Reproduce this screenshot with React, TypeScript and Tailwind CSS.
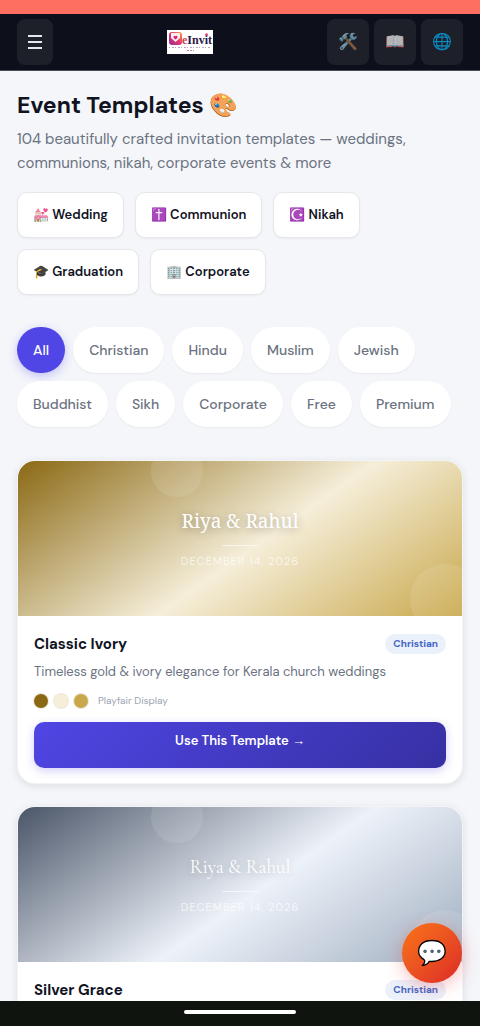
import React, { useState } from "react";

const categories = [
  { icon: "💒", label: "Wedding" },
  { icon: "✝️", label: "Communion" },
  { icon: "☪️", label: "Nikah" },
  { icon: "🎓", label: "Graduation" },
  { icon: "🏢", label: "Corporate" },
];

const filters = [
  "All",
  "Christian",
  "Hindu",
  "Muslim",
  "Jewish",
  "Buddhist",
  "Sikh",
  "Corporate",
  "Free",
  "Premium",
];

const tools = [
  { icon: "🛠️", label: "Tools" },
  { icon: "📖", label: "Guide" },
  { icon: "🌐", label: "Language" },
];

const templates = [
  {
    name: "Classic Ivory",
    tag: "Christian",
    description: "Timeless gold & ivory elegance for Kerala church weddings",
    font: "Playfair Display",
    colors: ["#8b6914", "#f5eed9", "#c9a84c"],
    preview: "bg-[linear-gradient(145deg,#8b6914_0%,#f5eed9_54%,#c9a84c_100%)]",
    title:
      "font-['Noto_Serif','Liberation_Serif',serif] [text-shadow:0_2px_8px_rgba(0,0,0,0.3)]",
  },
  {
    name: "Silver Grace",
    tag: "Christian",
    description: "Soft silver tones for graceful church ceremonies",
    font: "Cormorant Garamond",
    colors: ["#4a5568", "#edf2f9", "#a0aec0"],
    preview: "bg-[linear-gradient(145deg,#4a5568_0%,#edf2f9_54%,#a0aec0_100%)]",
    title:
      "font-['Cormorant_Garamond','EB_Garamond','Liberation_Serif',serif] [text-shadow:0_2px_8px_rgba(0,0,0,0.2)]",
  },
];

function Logo() {
  return (
    <svg width="46" height="24" viewBox="0 0 46 24" role="img" aria-label="eInvit">
      <defs>
        <linearGradient id="mark" x1="0" y1="1" x2="1" y2="0">
          <stop offset="0" stopColor="#8b2fa0" />
          <stop offset="0.5" stopColor="#e8356d" />
          <stop offset="1" stopColor="#f59e3b" />
        </linearGradient>
        <linearGradient id="letter" x1="0" y1="0" x2="0" y2="1">
          <stop offset="0" stopColor="#f0643c" />
          <stop offset="1" stopColor="#a3216f" />
        </linearGradient>
      </defs>
      <rect width="46" height="24" fill="#fff" />
      <rect x="2" y="2" width="13" height="13" rx="3" fill="url(#mark)" />
      <path d="M4 3h9v5l-4.500 4L4 8z" fill="#fdeef3" />
      <path d="M8.500 9.500C5 7 7 4.500 8.500 6.200C10 4.500 12 7 8.500 9.500z" fill="#d6246e" />
      <text x="15" y="14" fontSize="12" fontWeight="700" fontFamily="'Liberation Serif', serif" fill="#2a1747">
        <tspan fill="url(#letter)">e</tspan>Invit
      </text>
      <circle cx="39.500" cy="4.500" r="1.300" fill="#e8356d" />
      <path d="M2 17.500h42" stroke="#b9a6bd" strokeDasharray="1 2 2 1" />
      <path d="M20 20.500h7" stroke="#c77ba2" strokeDasharray="2 1" />
    </svg>
  );
}

function TemplateCard({ template }: { template: (typeof templates)[number] }) {
  return (
    <article className="overflow-hidden rounded-[18px] border border-gray-100 bg-white shadow-[0_2px_8px_rgba(15,23,42,0.1)]">
      <div
        className={`relative flex h-[155px] flex-col items-center justify-center overflow-hidden pb-1 text-white ${template.preview}`}
      >
        <span className="absolute -top-4 left-[30%] h-[52px] w-[52px] rounded-full bg-white/10" />
        <span className="absolute -right-[18px] -bottom-[18px] h-[70px] w-[70px] rounded-full bg-white/10" />
        <p className={`text-[19px] leading-8 ${template.title}`}>Riya &amp; Rahul</p>
        <span className="my-2 h-px w-9 bg-white/60" />
        <p className="text-[11px] leading-[14px] tracking-[1px] text-white/70">DECEMBER 14, 2026</p>
      </div>

      <div className="px-4 pt-4 pb-[15px]">
        <div className="flex items-center justify-between">
          <h2 className="text-[15px] leading-6 font-bold text-[#11131f]">{template.name}</h2>
          <span className="rounded-full bg-[#ebf1fb] px-2 text-[10px] leading-5 font-bold text-[#3f66c4]">
            {template.tag}
          </span>
        </div>
        <p className="mt-1 text-[13px] leading-[23px] text-[#6b7280]">{template.description}</p>
        <div className="mt-2 flex items-center gap-[6px]">
          {template.colors.map((color) => (
            <span
              key={color}
              className="h-[14px] w-[14px] rounded-full ring-1 ring-[#efe9dc]"
              style={{ backgroundColor: color }}
            />
          ))}
          <span className="ml-1 text-[10px] leading-5 text-[#9ca3af]">{template.font}</span>
        </div>
        <button className="mt-[11px] h-[46px] w-full rounded-[10px] bg-linear-135 from-[#4f46e5] to-[#3730a3] pb-2 text-[13px] font-semibold text-white shadow-[0_3px_10px_rgba(79,70,229,0.25)]">
          Use This Template <span className="font-['Liberation_Sans',sans-serif]">→</span>
        </button>
      </div>
    </article>
  );
}

export default function App() {
  const [active, setActive] = useState("All");

  return (
    <div className="flex h-screen flex-col bg-[#f4f6fa] font-['DM_Sans',Inter,sans-serif]">
      <div className="h-[14px] shrink-0 bg-[#ff6f61]" />

      {/* Header */}
      <header className="flex h-[57px] shrink-0 items-center justify-between border-b border-[#4b4d55] bg-[#0d0f1a] px-[17px]">
        <button
          aria-label="Menu"
          className="flex h-[46px] w-9 items-center justify-center rounded-lg bg-[#1e2029]"
        >
          <svg width="14" height="14" viewBox="0 0 14 14" stroke="#e5e7eb" strokeWidth="2">
            <path d="M0 1h14M0 7h14M0 13h14" />
          </svg>
        </button>
        <Logo />
        <div className="flex gap-[5px]">
          {tools.map((tool) => (
            <button
              key={tool.label}
              aria-label={tool.label}
              className="h-[46px] w-[42px] rounded-lg bg-[#1e2029] text-[16px]"
            >
              <span className="opacity-75">{tool.icon}</span>
            </button>
          ))}
        </div>
      </header>

      <main className="min-h-0 flex-1 overflow-y-auto px-[17px] pt-4 [scrollbar-width:none]">
        <h1 className="text-[23px] leading-9 font-bold text-[#11131f]">Event Templates 🎨</h1>
        <p className="mt-1 text-[15px] leading-6 text-[#6b7280]">
          104 beautifully crafted invitation templates — weddings, communions, nikah, corporate
          events &amp; more
        </p>

        <div className="mt-[17px] flex flex-wrap gap-[11px]">
          {categories.map((item) => (
            <button
              key={item.label}
              className="h-[46px] rounded-[10px] border border-[#e5e7eb] bg-white px-[15px] text-[13px] font-semibold text-[#11131f] shadow-xs"
            >
              {item.icon} {item.label}
            </button>
          ))}
        </div>

        {/* Filters */}
        <div className="mt-8 flex flex-wrap gap-2">
          {filters.map((name) => (
            <button
              key={name}
              onClick={() => setActive(name)}
              className={`h-[46px] rounded-full px-4 text-[14px] font-medium ${
                active === name
                  ? "bg-[#4f46e5] text-white shadow-[0_3px_10px_rgba(79,70,229,0.3)]"
                  : "bg-white text-[#6b7280] shadow-xs"
              }`}
            >
              {name}
            </button>
          ))}
        </div>

        <div className="mt-[33px] flex flex-col gap-[22px] pb-6">
          {templates.map((template) => (
            <TemplateCard key={template.name} template={template} />
          ))}
        </div>
      </main>

      {/* Chat */}
      <button
        aria-label="Chat"
        className="fixed right-[18px] bottom-[43px] h-[60px] w-[60px] rounded-full bg-linear-135 from-[#f97316] to-[#dc2626] text-[24px] shadow-[0_4px_18px_rgba(239,68,68,0.35)]"
      >
        💬
      </button>

      <div className="z-10 flex h-[25px] shrink-0 justify-center bg-[#10140f] pt-[9px]">
        <span className="h-1 w-28 rounded-full bg-white" />
      </div>
    </div>
  );
}
